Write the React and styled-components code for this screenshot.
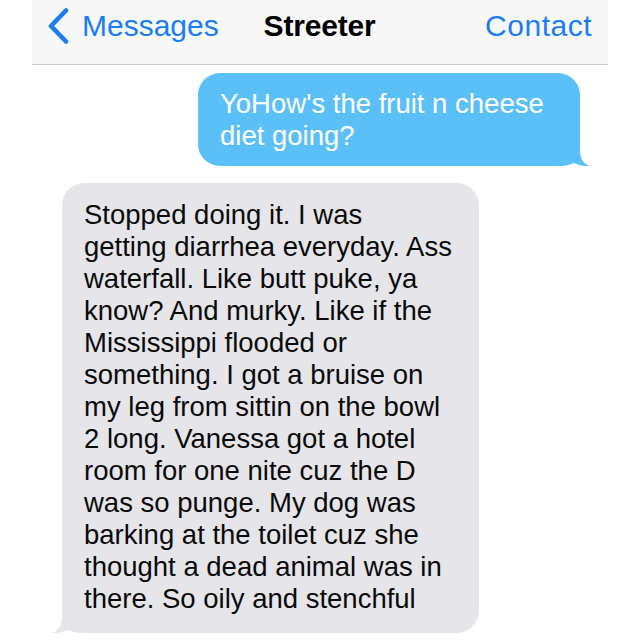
import styled, { createGlobalStyle } from "styled-components";

const GlobalStyle = createGlobalStyle`
    html, body {
        margin: 0;
        padding: 0;
        background: #ffffff;
        font-family: "Liberation Sans", Arial, sans-serif;
    }
`

const Screen = styled.div`
    width: 640px;
    height: 640px;
    overflow: hidden;
    background: #ffffff;
`
const NavBar = styled.div`
    margin: 0 32px;
    height: 65px;
    box-sizing: border-box;
    padding: 8px 16px 0 15px;
    background: #f7f7f8;
    border-bottom: 1px solid #c6c6c8;
    display: grid;
    grid-template-columns: 1fr auto 1fr;
    align-items: start;
    font-size: 30px;
    line-height: 36px;
`
const BackButton = styled.div`
    display: flex;
    align-items: center;
    gap: 13px;
    color: #1a7ef2;
    justify-self: start;
`
const Title = styled.div`
    font-weight: bold;
    color: #000000;
    letter-spacing: -0.2px;
`
const NavAction = styled.div`
    justify-self: end;
    color: #1a7ef2;
    letter-spacing: 0.5px;
`
const Thread = styled.div`
    display: flex;
    flex-direction: column;
    padding-top: 8px;
    gap: 17px;
`
const Bubble = styled.div`
    position: relative;
    box-sizing: border-box;
    font-size: 27.5px;
    line-height: 32px;
    border-radius: 22px;
    background: ${(p) => (p.$mine ? "#5bc0f8" : "#e5e5ea")};
    color: ${(p) => (p.$mine ? "#ffffff" : "#0a0a0a")};
    align-self: ${(p) => (p.$mine ? "flex-end" : "flex-start")};
    margin: ${(p) => (p.$mine ? "0 60px 0 0" : "0 0 0 62px")};
    width: ${(p) => p.$width}px;
    padding: ${(p) => (p.$mine ? "15px 0 14px 22px" : "16px 0 18px 22px")};
`
const Line = styled.div`
    white-space: nowrap;
`
const Tail = styled.svg`
    position: absolute;
    bottom: 0;
    width: 30px;
    height: 30px;
    ${(p) => (p.$mine ? "right: -10px;" : "left: -10px; transform: scaleX(-1);")}
`

function BubbleTail({ mine, color }) {
    return (
        <Tail $mine={mine} viewBox="0 0 30 30">
            <path
                d="M0 6 H20 V14 C20 22 23 28 30 30 C24 30.5 19 29.5 14 27 C10 29 5 30 0 30 Z"
                fill={color}
            />
        </Tail>
    )
}

const sent = ["YoHow's the fruit n cheese", "diet going?"]

const received = [
    "Stopped doing it. I was",
    "getting diarrhea everyday. Ass",
    "waterfall. Like butt puke, ya",
    "know? And murky. Like if the",
    "Mississippi flooded or",
    "something. I got a bruise on",
    "my leg from sittin on the bowl",
    "2 long. Vanessa got a hotel",
    "room for one nite cuz the D",
    "was so punge. My dog was",
    "barking at the toilet cuz she",
    "thought a dead animal was in",
    "there. So oily and stenchful",
]

function App() {
    return (
        <Screen>
            <GlobalStyle />
            <NavBar>
                <BackButton>
                    <svg width="22" height="36" viewBox="0 0 22 36">
                        <polyline
                            points="19,2.5 4,18 19,33.5"
                            fill="none"
                            stroke="#1a7ef2"
                            strokeWidth="4.6"
                            strokeLinecap="round"
                            strokeLinejoin="round"
                        />
                    </svg>
                    <span>Messages</span>
                </BackButton>
                <Title>Streeter</Title>
                <NavAction>Contact</NavAction>
            </NavBar>
            <Thread>
                <Bubble $mine $width={382}>
                    {sent.map((l) => (
                        <Line key={l}>{l}</Line>
                    ))}
                    <BubbleTail mine color="#5bc0f8" />
                </Bubble>
                <Bubble $width={417}>
                    {received.map((l) => (
                        <Line key={l}>{l}</Line>
                    ))}
                    <BubbleTail color="#e5e5ea" />
                </Bubble>
            </Thread>
        </Screen>
    )
}

export default App;
